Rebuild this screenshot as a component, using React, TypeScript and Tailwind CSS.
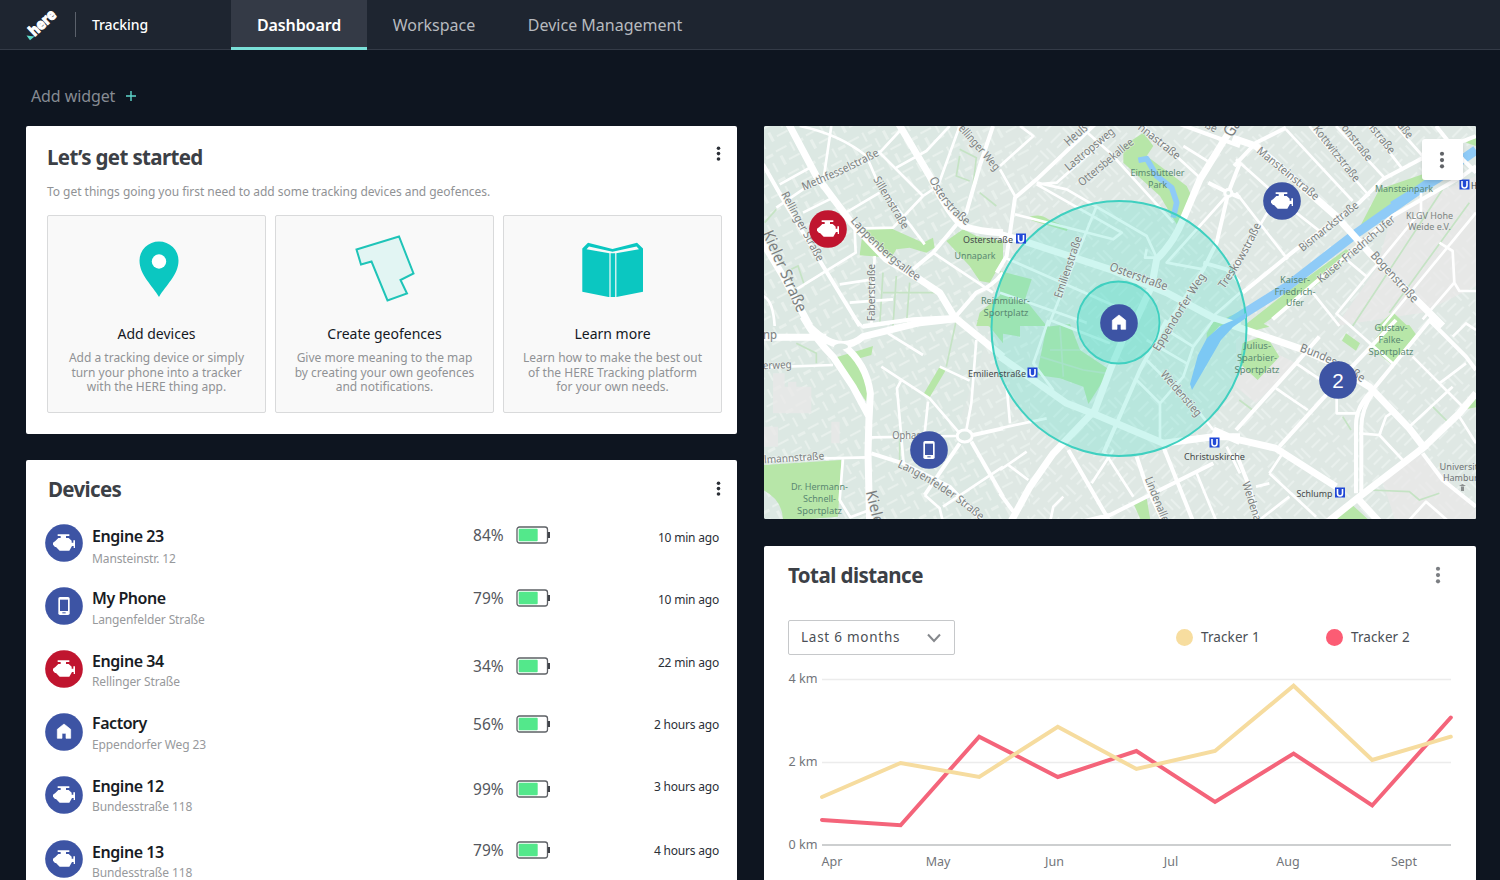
import React from "react";

type IconKind = "engine" | "phone" | "home" | "cluster";

const SANS = "'Noto Sans','Open Sans',sans-serif";

function MarkerIcon({ kind, red = false }: { kind: IconKind; red?: boolean }) {
  return (
    <svg viewBox="0 0 114 114" className="block h-[38px] w-[38px] shrink-0">
      <circle cx="57" cy="57" r="56.5" fill={red ? "#c0152f" : "#3d54a4"} />
      {kind === "engine" && (
        <path
          fill="#fff"
          d="M38 31H73V36H63V42H71L80 50V56H85V49H90V72H86V66H81L73 80H44L33 69H30L24 62V56L31 51L40 42H47V36H38Z"
        />
      )}
      {kind === "phone" && (
        <>
          <rect x="40" y="30" width="34" height="54" rx="5" fill="#fff" />
          <rect x="45" y="38" width="24" height="34" fill={red ? "#c0152f" : "#3d54a4"} />
          <rect x="52" y="76" width="10" height="3" fill="#3d54a4" />
        </>
      )}
      {kind === "home" && (
        <path fill="#fff" d="M57 33L77 49V76H63V61H51V76H37V49Z" stroke="#fff" strokeWidth="2" strokeLinejoin="round" />
      )}
      {kind === "cluster" && (
        <text x="57" y="80" fill="#fff" fontSize="62" textAnchor="middle" fontFamily="'Liberation Sans',sans-serif">
          2
        </text>
      )}
    </svg>
  );
}

function Dots({ className }: { className: string }) {
  return (
    <svg viewBox="0 0 5 18" className={className} fill="currentColor">
      <circle cx="2.5" cy="3.2" r="1.8" />
      <circle cx="2.5" cy="8.6" r="1.8" />
      <circle cx="2.5" cy="14" r="1.8" />
    </svg>
  );
}

function Header() {
  return (
    <header className="flex h-[50px] border-b border-[#343b47] bg-[#1e2530] text-white">
      <div className="flex w-[231px] shrink-0 items-center">
        <svg viewBox="0 0 75 50" className="h-[50px] w-[75px] shrink-0">
          <text
            transform="translate(34.500 37) rotate(-43)"
            fontFamily={SANS}
            fontWeight="800"
            fontSize="15"
            fill="#fff"
            stroke="#fff"
            strokeWidth="1"
            textLength="31"
            lengthAdjust="spacingAndGlyphs"
          >
            here
          </text>
          <path d="M26.500 35.500L34.500 36.500L30 40.300Z" fill="#5fdccb" />
        </svg>
        <div className="h-[25px] w-px bg-[#5b616b]" />
        <span className="ml-[16px] text-[14px] font-medium tracking-[-0.1px]">Tracking</span>
      </div>
      <nav className="flex h-[50px] text-[16px] text-[#b7babf]">
        <a className="flex w-[136px] items-center justify-center border-b-[3px] border-[#7adfd8] bg-[#343a46] pt-[2px] font-semibold tracking-[-0.1px] text-white">
          Dashboard
        </a>
        <a className="ml-[25px] flex w-[84px] items-center justify-center whitespace-nowrap">Workspace</a>
        <a className="ml-[52px] flex w-[154px] items-center justify-center whitespace-nowrap">Device Management</a>
      </nav>
    </header>
  );
}

function Step({ icon, title, lines }: { icon: React.ReactNode; title: string; lines: string[] }) {
  return (
    <div className="flex h-[198px] flex-1 flex-col items-center rounded-[2px] border border-[#d9dadb] bg-[#f9f9f9]">
      <div className="h-[107px]">{icon}</div>
      <div className="text-[14px] leading-[22px] text-[#14181f]">{title}</div>
      <div className="mt-[6px] text-center text-[12px] leading-[14.6px] text-[#909295]">
        {lines.map((l) => (
          <div key={l} className="whitespace-nowrap">
            {l}
          </div>
        ))}
      </div>
    </div>
  );
}

function GetStarted() {
  return (
    <section className="h-[308px] rounded-[2px] bg-white pr-[15px] pl-[21px]">
      <div className="flex h-[52px] items-start justify-between">
        <h2 className="mt-[17px] text-[20.5px] leading-[29px] font-bold tracking-[-0.65px] text-[#3c4046]">Let’s get started</h2>
        <Dots className="mt-[19px] mr-px h-[18px] w-[5px] text-[#2c3037]" />
      </div>
      <p className="pt-[4px] text-[12px] leading-[20px] tracking-[-0.03px] text-[#909295]">
        To get things going you first need to add some tracking devices and geofences.
      </p>
      <div className="mt-[13px] flex gap-[9px]">
        <Step
          title="Add devices"
          lines={["Add a tracking device or simply", "turn your phone into a tracker", "with the HERE thing app."]}
          icon={
            <svg viewBox="0 0 80 107" className="ml-[5px] h-[107px] w-[80px]">
              <path d="M40 81C33 69 20.500 59 20.500 44.500A19.500 19 0 0 1 59.500 44.500C59.500 59 47 69 40 81Z" fill="#0bc7c1" />
              <circle cx="40" cy="45.500" r="7.200" fill="#fff" />
            </svg>
          }
        />
        <Step
          title="Create geofences"
          lines={["Give more meaning to the map", "by creating your own geofences", "and notifications."]}
          icon={
            <svg viewBox="345 216 80 107" className="h-[107px] w-[80px]">
              <path
                d="M356.500 249.500L399 236.500L413.500 273.500L400.500 280L407 293.500L387.500 300.500L371.500 261.500L361 264.500Z"
                fill="#e2f5f3"
                stroke="#1fc4b8"
                strokeWidth="2"
              />
            </svg>
          }
        />
        <Step
          title="Learn more"
          lines={["Learn how to make the best out", "of the HERE Tracking platform", "for your own needs."]}
          icon={
            <svg viewBox="573 216 80 107" className="h-[107px] w-[80px]">
              <path d="M582.300 248.500L588 242.800L612.500 249L637 242.800L643 248.500V291.700L616.500 297H608.500L582.300 291.700Z" fill="#0bc7c1" />
              <path d="M586.500 249.300L589 246.500L612.500 251.700L636.500 246.500L639 249.300L616 253.300H609.300Z" fill="#f9f9f9" />
              <path d="M610 252.500V298M615.800 252.500V298" stroke="#f9f9f9" strokeWidth="1.200" />
            </svg>
          }
        />
      </div>
    </section>
  );
}

type Device = {
  name: string;
  place: string;
  pct: string;
  ago: string;
  kind: IconKind;
  red?: boolean;
  row: string;
  nameAt: string;
  placeAt: string;
  pctAt: string;
  agoAt: string;
};

const devices: Device[] = [
  { name: "Engine 23", place: "Mansteinstr. 12", pct: "84%", ago: "10 min ago", kind: "engine", row: "h-[63px]", nameAt: "mt-[1px]", placeAt: "mt-[3px]", pctAt: "mt-0", agoAt: "mt-[4px]" },
  { name: "My Phone", place: "Langenfelder Straße", pct: "79%", ago: "10 min ago", kind: "phone", row: "h-[63px]", nameAt: "mt-0", placeAt: "mt-[2px]", pctAt: "mt-0", agoAt: "mt-[3px]" },
  { name: "Engine 34", place: "Rellinger Straße", pct: "34%", ago: "22 min ago", kind: "engine", red: true, row: "h-[63px]", nameAt: "mt-0", placeAt: "mt-[1px]", pctAt: "mt-[5px]", agoAt: "mt-[3px]" },
  { name: "Factory", place: "Eppendorfer Weg 23", pct: "56%", ago: "2 hours ago", kind: "home", row: "h-[63px]", nameAt: "-mt-[1px]", placeAt: "mt-[2px]", pctAt: "mt-0", agoAt: "mt-[2px]" },
  { name: "Engine 12", place: "Bundesstraße 118", pct: "99%", ago: "3 hours ago", kind: "engine", row: "h-[64px]", nameAt: "-mt-[1px]", placeAt: "mt-[1px]", pctAt: "mt-[2px]", agoAt: "mt-[1px]" },
  { name: "Engine 13", place: "Bundesstraße 118", pct: "79%", ago: "4 hours ago", kind: "engine", row: "h-[64px]", nameAt: "mt-[1px]", placeAt: "mt-[1px]", pctAt: "-mt-[1px]", agoAt: "mt-[1px]" },
];

function Battery() {
  return (
    <svg viewBox="0 0 34 18" className="h-[18px] w-[34px]">
      <rect x="1" y="1" width="30.500" height="16" rx="2.500" fill="#fff" stroke="#5e6166" strokeWidth="1.300" />
      <rect x="2.700" y="2.700" width="19" height="12.600" rx="1" fill="#53e88b" />
      <rect x="31.700" y="6" width="2.300" height="6" fill="#3f4248" />
    </svg>
  );
}

function Devices() {
  return (
    <section className="h-[440px] rounded-[2px] bg-white pr-[18px] pl-[19px]">
      <div className="flex h-[64px] items-start justify-between">
        <h2 className="mt-[15px] ml-[3px] text-[20.5px] leading-[29px] font-bold tracking-[-0.65px] text-[#3c4046]">Devices</h2>
        <Dots className="mt-[20px] -mr-[2px] h-[18px] w-[5px] text-[#2c3037]" />
      </div>
      {devices.map((d) => (
        <div key={d.name} className={`flex items-start ${d.row}`}>
          <MarkerIcon kind={d.kind} red={d.red} />
          <div className="ml-[9px] w-[381px]">
            <div className={`text-[16px] leading-[22px] font-semibold tracking-[-0.45px] text-[#181c24] ${d.nameAt}`}>{d.name}</div>
            <div className={`text-[12px] leading-[18px] tracking-[-0.12px] text-[#97999c] ${d.placeAt}`}>{d.place}</div>
          </div>
          <div className={`flex items-center ${d.pctAt}`}>
            <span className="w-[43px] text-[15.5px] leading-[22px] tracking-[0.05px] text-[#54575d]">{d.pct}</span>
            <Battery />
          </div>
          <div className={`ml-auto text-[12px] leading-[20px] tracking-[-0.2px] text-[#2b2f37] ${d.agoAt}`}>{d.ago}</div>
        </div>
      ))}
    </section>
  );
}

/* Each map sector is drawn on a grid of thirds of a pixel from its own origin.
   A name runs from one point to another, with an optional size and bend. */
type Name = [string, number, number, number, number, number?, number?];
type SectorData = {
  x: number;
  y: number;
  parks: string;
  water?: string;
  pale?: string;
  paths?: string;
  minor: string;
  mid: string;
  major: string;
  names: Name[];
};

const sectors: SectorData[] = [
  {
    x: 763,
    y: 126,
    parks:
      "M300 310L380 305L480 350L510 335L515 365L490 380L440 365L400 370L385 395L290 388ZM550 345L600 310L640 330L720 345V400L680 470L650 465L620 420ZM650 560L720 500V600H640Z",
    paths: "M590 70L640 95L630 180M590 90L580 150L620 165M85 430L105 420L125 480M360 440L350 600M400 450L390 600M440 470L430 600M360 500H520M5 290L40 250M650 200L700 240",
    minor:
      "M50 175L150 120M40 245L120 190L350 80L410 15M205 0L180 170M110 0Q230 25 310 90L345 170L485 355M345 75L480 210L525 180L590 0M400 125L490 75L560 0M480 210L390 305L280 308M240 265L350 200M120 260L210 215M275 310L278 380L100 490M230 475L330 460M260 530L390 520M335 390L325 600M0 510Q30 520 35 600M510 380L690 500",
    mid: "M0 115L60 220L180 420L290 600M690 0L650 120L610 260L510 380L450 430M720 440Q690 480 640 500L575 575L610 600M300 600L450 580L575 573",
    major: "M75 -10L160 150L265 290L370 400L470 460L530 500L575 575M405 -10L500 150Q560 270 600 300Q650 318 720 320M-6 340L60 450L140 600",
    names: [
      ["Methfesselstraße", 122, 194, 350, 88, 34, 6],
      ["Rellinger Straße", 54, 205, 164, 408],
      ["Sillemstraße", 330, 160, 420, 312],
      ["Lappenbergsallee", 262, 285, 464, 466, 34, 20],
      ["Osterstraße", 498, 160, 612, 300, 36, 24],
      ["ellinger Weg", 585, 8, 696, 136],
      ["Kieler Straße", -2, 322, 104, 562, 48],
      ["Faberstraße", 336, 586, 336, 414],
    ],
  },
  {
    x: 1000,
    y: 126,
    parks:
      "M370 60L430 20L460 60L440 90L560 180L575 210L530 295L480 210L370 110ZM0 435L95 460L75 520L140 600H0ZM80 275Q120 260 145 280L205 305L200 315L100 285ZM630 600L690 570L720 560V600Z",
    water: "M415 103L440 98L470 150L515 185L530 230L520 275",
    minor:
      "M60 0L100 30L0 120M0 130L45 210M45 265L340 340L365 320L110 175M290 240L145 600M15 395L345 540M240 0L330 80L520 290M340 20L170 170L110 175M430 0L600 155M550 60L630 110M110 170L200 190L440 330L470 395L435 395L440 370M610 430L500 410L680 210M0 500L260 590M640 570L720 500",
    mid: "M500 -20L720 60M720 110L685 200L650 350L610 430L500 600M625 170L685 200L720 215M610 410L680 430L720 470M290 -10L110 160L45 215L20 390L-10 440",
    major: "M720 -20L680 30L600 160L545 290Q520 350 470 400L455 480L400 600M0 325L70 345L330 430L500 500L640 575L720 600",
    names: [
      ["Heuß", 206, 62, 265, 10, 38],
      ["Lastropsweg", 206, 136, 346, 20],
      ["Ottersbekallee", 246, 182, 404, 52],
      ["nnastraße", 412, 8, 530, 102],
      ["ße", 612, 4, 645, 20],
      ["Ga", 696, 36, 724, -8, 50],
      ["Emilienstraße", 184, 518, 246, 336],
      ["Osterstraße", 326, 432, 498, 494, 36],
      ["Eppendorfer Weg", 476, 678, 618, 450],
      ["Treskowstraße", 672, 490, 784, 296, 34, 12],
    ],
  },
  {
    x: 1236,
    y: 126,
    parks:
      "M10 610L150 500L330 370L350 380L290 440L130 560L60 610ZM365 315L430 190L560 145L590 150L470 230ZM415 610L470 558L525 610ZM690 50L720 25V60Z",
    water: "M-20 590L150 484L350 330L450 260L720 72M470 240L600 160L660 120",
    pale: "M470 260L720 150V480L560 560L300 600L420 430Z",
    paths: "M620 190L350 600M700 230L460 560",
    minor:
      "M0 100L180 260L270 330M0 200L155 400M150 10L350 225M220 0L400 210M300 0L450 160M400 0L500 130M480 0L560 90M0 420L100 250M720 260L440 600M555 200L555 255L300 565M330 400L390 450M230 500L310 600M610 350L650 375L655 470L670 495H720M655 470L560 580",
    mid: "M20 500L180 370L370 230L440 160L590 80L720 30M110 580L250 460L470 270L680 150L720 120M-6 120L60 50L150 5M600 0L680 100L720 140",
    major: "M-10 36L60 60L180 165L300 270L400 380L580 560L620 600",
    names: [
      ["Mansteinstraße", 60, 78, 238, 224],
      ["Kottwitzstraße", 230, 10, 356, 170],
      ["onstraße", 315, 6, 394, 108],
      ["lstraße", 398, 6, 462, 86],
      ["aße", 484, 0, 516, 40],
      ["Bismarckstraße", 200, 378, 370, 242],
      ["Kaiser-Friedrich-Ufer", 256, 472, 480, 284],
      ["Bogenstraße", 402, 390, 532, 532, 36],
    ],
  },
  {
    x: 763,
    y: 320,
    parks:
      "M220 112L300 88L330 78L325 105L290 115L318 170L310 245ZM480 225L530 140L550 148L500 232ZM0 435L235 420L225 590L60 604Q60 540 0 510ZM640 0H720V70L680 20Z",
    pale: "M30 160H65V200H145V280H30ZM0 320H45V380H0ZM205 305H230V370H205ZM60 430H95V470L80 480L60 465ZM75 185H100V250H75Z",
    paths: "M100 70L160 100V130M580 0L550 140M410 330V420",
    minor:
      "M0 142L210 135M355 140L500 235L590 340M375 40L480 105M530 140L620 182M640 60L625 250L610 330M485 525L530 565L540 606M540 560L720 440M325 352L580 348M495 245L485 340M415 180L402 205L422 430M0 420L310 412M240 415L230 540L262 592L320 570M280 0L300 22L380 10",
    mid: "M630 345L720 325M625 365L720 530M590 370L485 525M325 400L420 430L560 500L660 606",
    major: "M120 -10Q160 60 210 110L270 200L318 290L315 400L320 610M0 52H190M240 75Q310 130 322 220L318 300M140 20Q230 110 300 50L470 8L580 -4L720 110",
    names: [
      ["np", 0, 58, 42, 58, 36],
      ["erweg", 0, 148, 86, 144, 32],
      ["lmannstraße", 4, 430, 184, 418, 32],
      ["Ophagen", 388, 356, 510, 356, 32],
      ["Langenfelder Straße", 402, 440, 652, 602, 34, -20],
      ["Kieler", 308, 515, 338, 635, 46],
    ],
  },
  {
    x: 1000,
    y: 320,
    parks: "M140 20L210 12L240 90L330 150L265 252L250 200L180 175L110 165ZM0 0H60V50L0 40ZM398 545L440 535L452 606H425ZM620 40L640 5L670 5L620 60Z",
    paths: "M120 110L250 150L320 160M180 20L190 170M240 90L150 90",
    minor:
      "M145 0L100 130L160 210M150 0L330 70M440 60L560 130M500 30L580 80L550 170L480 250V360M410 180L480 250M440 120L600 280L640 330M310 390L400 530M340 390L275 490M590 460L650 606M680 380L720 460M0 325L140 295M0 450L80 395M20 200L30 310M25 435L85 480M150 606L160 560L190 530M580 80L640 0",
    mid: "M205 390L330 606M410 410L440 500L490 606M490 380L580 606M240 606L330 585L640 430M0 520L40 575M500 0L420 150L350 310L310 400",
    major: "M0 110L100 180L200 250L290 285L490 370L640 350L720 350M385 20L330 150L285 270L160 400L90 500L30 610M640 330L720 365",
    names: [
      ["Weidenstieg", 480, 164, 590, 292],
      ["Lindenallee", 434, 476, 494, 624],
    ],
  },
  {
    x: 1236,
    y: 320,
    parks:
      "M400 80L450 15L520 15L545 50L470 135ZM330 40L372 70L360 92L318 62ZM20 70L90 45L130 110L65 180L10 130ZM262 606L350 556L405 606ZM688 268L720 235V262ZM20 40L60 0L100 20Z",
    pale: "M0 60L20 50L180 130L60 250L0 200ZM440 485L560 400L720 570V610H480Z",
    paths: "M590 260L640 310M320 290L345 330M400 510L520 515L550 540L610 520M10 240L50 270",
    minor:
      "M120 205L215 270M180 130L270 190M302 230V280H360M470 130L300 -20M530 110L690 270M370 340L430 345L450 290L480 270M430 345L500 420M650 50L690 10L720 30M100 460L140 400M100 460L240 590M690 130L610 190M520 320L650 200M670 290L720 370M60 500L100 490M160 530L70 600M520 600L570 545L640 606M400 220L365 280",
    mid: "M0 330L180 130L250 50M130 380L320 170L480 0M590 -10L410 210M580 0L690 110L720 150M0 400L40 500L70 610M560 400L620 480L720 560M410 210Q358 260 360 320V520M410 220Q374 270 376 330V520",
    major: "M-10 16L190 85L280 125L400 200L520 325L570 390M-10 355L120 385L300 500M270 610L370 530L560 385L670 280L720 220M360 530L430 606",
    names: [
      ["Bundesstraße", 190, 94, 378, 188, 36, -14],
      ["Weidenallee", 18, 490, 70, 650],
    ],
  },
];

function StreetName({ n, id }: { n: Name; id: string }) {
  const [text, x1, y1, x2, y2, size = 34, bend = 0] = n;
  const length = Math.hypot(x2 - x1, y2 - y1);
  const cx = (x1 + x2) / 2 - ((y2 - y1) / length) * bend;
  const cy = (y1 + y2) / 2 + ((x2 - x1) / length) * bend;
  const angle = (Math.atan2(y2 - y1, x2 - x1) * 180) / Math.PI;
  const look = {
    fontSize: size,
    fill: "#7b807f",
    stroke: "#edf3f0",
    strokeOpacity: 0.6,
    strokeWidth: 5,
    strokeLinejoin: "round" as const,
    paintOrder: "stroke",
  };
  if (bend) {
    return (
      <>
        <path id={id} d={`M${x1} ${y1}Q${cx} ${cy} ${x2} ${y2}l${(x2 - x1) / 8} ${(y2 - y1) / 8}`} fill="none" />
        <text {...look} textLength={length} lengthAdjust="spacingAndGlyphs">
          <textPath href={`#${id}`} textLength={length} lengthAdjust="spacingAndGlyphs">
            {text}
          </textPath>
        </text>
      </>
    );
  }
  return (
    <text {...look} transform={`translate(${x1} ${y1}) rotate(${angle})`} textLength={length} lengthAdjust="spacingAndGlyphs">
      {text}
    </text>
  );
}

const places: [string, number, number, number, string][] = [
  ["Eimsbütteler", 1157.5, 175.5, 54, "#5a8872"],
  ["Park", 1157.5, 187.5, 19, "#5a8872"],
  ["Unnapark", 975, 259, 41, "#5a8872"],
  ["Reinmüller-", 1005.500, 303.5, 49, "#5a8872"],
  ["Sportplatz", 1006, 315.5, 45, "#5a8872"],
  ["Mansteinpark", 1404, 192, 58, "#5a8872"],
  ["KLGV Hohe", 1429.5, 218.5, 47, "#7c8582"],
  ["Weide e.V.", 1429.5, 229.5, 43, "#7c8582"],
  ["Kaiser-", 1295, 282.5, 30, "#5a8872"],
  ["Friedrich-", 1295, 294.5, 41, "#5a8872"],
  ["Ufer", 1295, 306, 18, "#5a8872"],
  ["Gustav-", 1391, 330.5, 33, "#5a8872"],
  ["Falke-", 1391, 342.5, 25, "#5a8872"],
  ["Sportplatz", 1391, 354.5, 45, "#5a8872"],
  ["Julius-", 1257.5, 349, 27, "#5a8872"],
  ["Sparbier-", 1257, 361, 40, "#5a8872"],
  ["Sportplatz", 1257, 373, 45, "#5a8872"],
  ["Dr. Hermann-", 819.5, 489.5, 57, "#5a8872"],
  ["Schnell-", 819.5, 501.5, 33, "#5a8872"],
  ["Sportplatz", 819.5, 513.5, 45, "#5a8872"],
  ["Osterstraße", 988, 243, 50, "#45494b"],
  ["Emilienstraße", 997, 377, 58, "#45494b"],
  ["Christuskirche", 1214.5, 460, 61, "#45494b"],
  ["Schlump", 1314.5, 497, 36, "#45494b"],
  ["Universität", 1463, 470, 47, "#6f7476"],
  ["Hamburg", 1463, 481, 40, "#6f7476"],
  ["H", 1474, 189, 6, "#45494b"],
];

const stations = [
  [1021, 238.5],
  [1032.5, 372.500],
  [1214.500, 442.500],
  [1340, 492.500],
  [1464.500, 184.500],
];

const pins: { kind: IconKind; red?: boolean; at: string }[] = [
  { kind: "engine", red: true, at: "left-[45px] top-[84px]" },
  { kind: "engine", at: "left-[499px] top-[56px]" },
  { kind: "home", at: "left-[335.5px] top-[178px]" },
  { kind: "cluster", at: "left-[555px] top-[235px]" },
  { kind: "phone", at: "left-[146px] top-[305px]" },
];

function MapCard() {
  const group = (s: SectorData) => `translate(${s.x} ${s.y}) scale(.33333)`;
  return (
    <section className="relative h-[393px] overflow-hidden rounded-[2px] bg-[#dfeae5]">
      <svg viewBox="764 126 712 393" className="block h-[393px] w-[712px]" fontFamily={SANS}>
        <defs>
          <pattern id="housesA" width="34" height="26" patternUnits="userSpaceOnUse" patternTransform="rotate(-28)">
            <path d="M2 3H14V5H2ZM18 2H20V12H18ZM24 4H32V7H24ZM3 10H6V20H3ZM10 16H22V18H10ZM27 13H29V23H27Z" fill="#e8f0ec" />
          </pattern>
          <pattern id="housesB" width="32" height="28" patternUnits="userSpaceOnUse" patternTransform="rotate(-45)">
            <path d="M2 3H16V5H2ZM20 2H22V14H20ZM26 5H28V18H26ZM3 11H15V13H3ZM6 19H18V21H6ZM22 22H31V24H22Z" fill="#e9f0ed" />
          </pattern>
        </defs>
        <rect x="764" y="126" width="712" height="393" fill="#dce8e3" />
        <path d="M960 126H1476V519H1010L960 420L1000 300Z" fill="#dfe8e4" />
        <path d="M764 126H1030V519H764Z" fill="url(#housesA)" />
        <path d="M1030 126H1476V519H1030Z" fill="url(#housesB)" />
        {sectors.map((s, i) => (
          <g key={i} transform={group(s)}>
            {s.pale && <path d={s.pale} fill="#e9e8e8" fillOpacity=".75" />}
            <path d={s.parks} fill="#b7e6a8" />
            {s.paths && <path d={s.paths} fill="none" stroke="#c5e3c4" strokeWidth="5" />}
            {s.water && <path d={s.water} fill="none" stroke="#8fcbf7" strokeWidth={s.x === 1236 ? 28 : 17} strokeLinejoin="round" />}
          </g>
        ))}
        {sectors.map((s, i) => (
          <g key={i} transform={group(s)} fill="none" stroke="#fff" strokeLinejoin="round">
            <path d={s.minor} strokeWidth="8" />
            <path d={s.mid} strokeWidth="12" />
            <path d={s.major} strokeWidth="21" />
          </g>
        ))}
        <ellipse cx="964.700" cy="436" rx="7.500" ry="6" fill="#dce8e3" stroke="#fff" strokeWidth="3" />
        <ellipse cx="841" cy="346.500" rx="7" ry="3" fill="#dce8e3" />
        <circle cx="1228.300" cy="193" r="3.500" fill="#dce8e3" stroke="#fff" strokeWidth="3" />
        <circle cx="1119" cy="328.500" r="127.500" fill="#5fe0cc" fillOpacity=".3" stroke="#3fd0c0" strokeWidth="2" />
        <circle cx="1118.500" cy="322.500" r="41" fill="#4fdcc9" fillOpacity=".35" stroke="#3fd0c0" strokeWidth="1.800" />
        <path d="M1222 325L1236 319L1246 313V318L1233 327L1221 340L1206 366L1192 390L1190 384L1198 355L1207 338Z" fill="#7cc8f4" />
        {sectors.map((s, i) => (
          <g key={i} transform={group(s)}>
            {s.names.map((n, j) => (
              <StreetName key={j} n={n} id={`street-${i}-${j}`} />
            ))}
          </g>
        ))}
        {places.map(([t, x, y, w, c], i) => (
          <text key={i} x={x - w / 2} y={y} fontSize="9.500" fill={c} textLength={w} lengthAdjust="spacingAndGlyphs">
            {t}
          </text>
        ))}
        {stations.map(([x, y]) => (
          <g key={x}>
            <rect x={x - 5} y={y - 5} width="10" height="10" fill="#2148d6" />
            <path d={`M${x - 2.500} ${y - 3.500}v4.500a2.500 2.500 0 0 0 5 0v-4.500`} fill="none" stroke="#fff" strokeWidth="1.600" />
          </g>
        ))}
        <path d="M1459 486L1462.500 484L1466 486ZM1461 486.500H1464V491H1461Z" fill="#8a8e8e" />
      </svg>
      {pins.map((p) => (
        <div key={p.at} className={`absolute ${p.at}`}>
          <MarkerIcon kind={p.kind} red={p.red} />
        </div>
      ))}
      <button className="absolute top-[13px] left-[658px] flex h-[41px] w-[41px] items-center justify-center rounded-[3px] bg-white shadow-md">
        <Dots className="mt-px mr-px h-[21px] w-[6px] text-[#606367]" />
      </button>
    </section>
  );
}

const ticks: [string, number][] = [
  ["Apr", 832],
  ["May", 938],
  ["Jun", 1054.5],
  ["Jul", 1171],
  ["Aug", 1288],
  ["Sept", 1404],
];
const tracker1 = [797, 763, 777, 726.7, 769, 751, 685.7, 760, 736.7];
const tracker2 = [820, 825.3, 736.7, 777, 751, 802, 753.5, 805.5, 717.5];
const line = (ys: number[]) => ys.map((y, i) => `${822 + i * 78.6},${y}`).join(" ");

function Distance() {
  return (
    <section className="h-[360px] rounded-[2px] bg-white">
      <div className="flex h-[74px] items-start justify-between pr-[35px] pl-[24px]">
        <h2 className="mt-[15px] text-[20.5px] leading-[29px] font-bold tracking-[-0.55px] text-[#3c4046]">Total distance</h2>
        <Dots className="mt-[19px] h-[21px] w-[6px] text-[#7b7e82]" />
      </div>
      <div className="flex h-[35px] items-center pl-[24px] text-[13.5px] text-[#4b4f56]">
        <div className="flex h-[35px] w-[167px] items-center justify-between rounded-[2px] border border-[#c6c8ca] pr-[13px] pl-[12px] tracking-[0.75px]">
          Last 6 months
          <svg viewBox="0 0 14 10" className="h-[10px] w-[14px]" fill="none" stroke="#85888c" strokeWidth="2">
            <path d="M1 1.500L7 8L13 1.500" />
          </svg>
        </div>
        <div className="ml-[221px] flex w-[150px] items-center gap-[8px] tracking-[0.1px]">
          <span className="h-[17px] w-[17px] rounded-full bg-[#f7dd9f]" />
          Tracker 1
        </div>
        <div className="flex items-center gap-[8px] tracking-[0.1px]">
          <span className="h-[17px] w-[17px] rounded-full bg-[#fc5c74]" />
          Tracker 2
        </div>
      </div>
      <svg viewBox="764 655 712 225" className="block h-[225px] w-[712px]" fontFamily={SANS} fontSize="12.500" fill="#72757a">
        <path d="M822 679.500H1451M822 762.500H1451" stroke="#ececec" strokeWidth="1.500" />
        <path d="M822 845H1451" stroke="#bdbfc1" strokeWidth="1.300" />
        {["4 km", "2 km", "0 km"].map((t, i) => (
          <text key={t} x="788.500" y={683 + i * 83} textLength="29" lengthAdjust="spacingAndGlyphs">
            {t}
          </text>
        ))}
        {ticks.map(([t, x]) => (
          <text key={t} x={x} y="866" textAnchor="middle">
            {t}
          </text>
        ))}
        <polyline points={line(tracker2)} fill="none" stroke="#f4647a" strokeWidth="4" strokeLinecap="round" />
        <polyline points={line(tracker1)} fill="none" stroke="#f6dc9f" strokeWidth="4" strokeLinecap="round" />
      </svg>
    </section>
  );
}

export default function App() {
  return (
    <div className="h-[880px] w-[1500px] overflow-hidden bg-[#0e1520] font-['Noto_Sans','Open_Sans',sans-serif]">
      <Header />
      <div className="flex h-[76px] items-center pt-[15px] pl-[31px] text-[16px] tracking-[-0.1px] text-[#868b93]">
        Add widget
        <svg viewBox="0 0 10 10" className="ml-[11px] h-[10px] w-[10px]" stroke="#5fd6cc" strokeWidth="1.400">
          <path d="M5 0V10M0 5H10" />
        </svg>
      </div>
      <main className="flex items-start gap-[26px] pl-[26px]">
        <div className="mr-px flex w-[711px] flex-col gap-[26px]">
          <GetStarted />
          <Devices />
        </div>
        <div className="flex w-[712px] flex-col gap-[27px]">
          <MapCard />
          <Distance />
        </div>
      </main>
    </div>
  );
}
